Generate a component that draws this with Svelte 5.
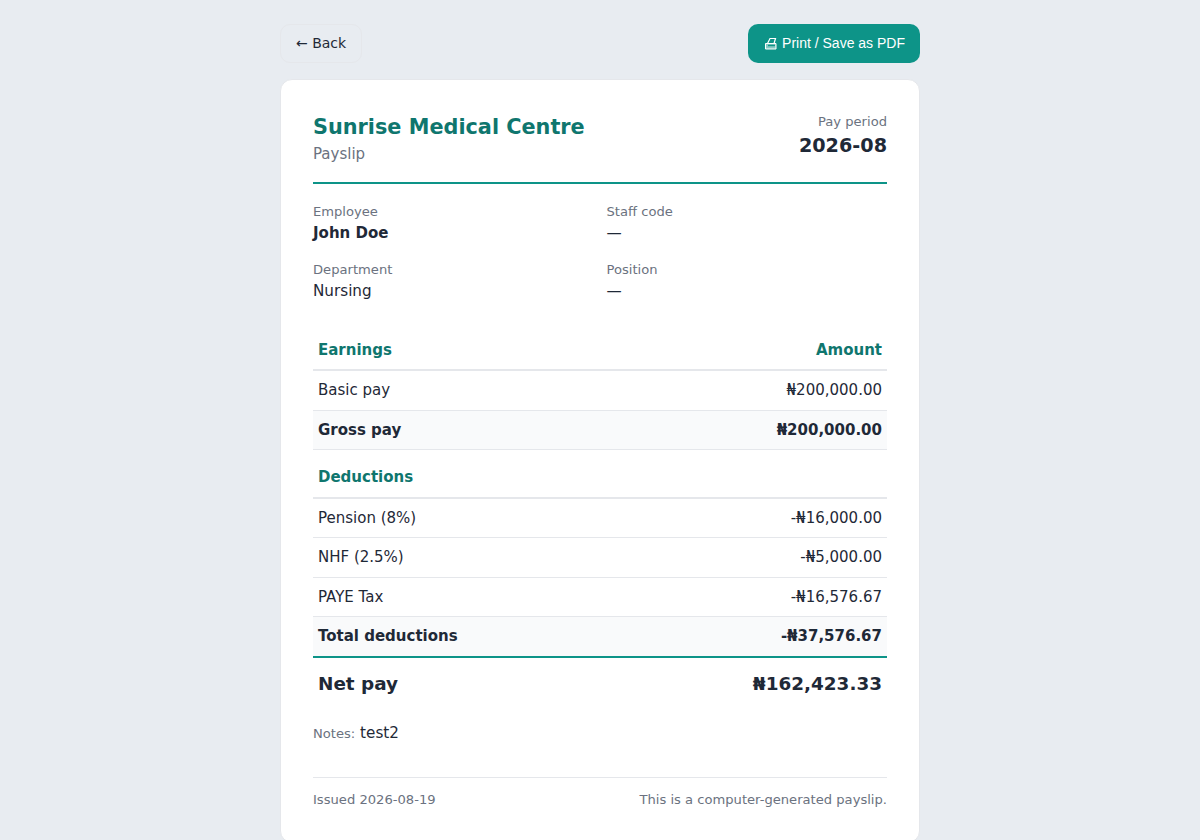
<script>
const earnings = [{ label: 'Basic pay', amount: '₦200,000.00' }];
const deductions = [
  { label: 'Pension (8%)', amount: '-₦16,000.00' },
  { label: 'NHF (2.5%)', amount: '-₦5,000.00' },
  { label: 'PAYE Tax', amount: '-₦16,576.67' }
];
</script>

<main class="page">
  <div class="toolbar">
    <a class="back" href="#back">← Back</a>
    <button class="print">
      <svg class="print-icon" viewBox="0 0 13 13" width="13" height="13" fill="none" stroke="currentColor" aria-hidden="true">
        <path d="M3.5 6.5 6 1.5h5.5L10 6.5" stroke-width="1.2" />
        <path d="M1.5 6.5h10.5v5.5H1.5z" fill="currentColor" fill-opacity="0.5" />
        <path d="M4 8.5h7" stroke="#0d9488" stroke-width="1.4" />
      </svg>
      Print / Save as PDF
    </button>
  </div>

  <section class="card">
    <header class="head">
      <div>
        <h1>Sunrise Medical Centre</h1>
        <div class="sub">Payslip</div>
      </div>
      <div class="period">
        <div class="period-label">Pay period</div>
        <div class="period-val">2026-08</div>
      </div>
    </header>

    <div class="meta">
      <div><div class="label">Employee</div><div class="val"><strong>John Doe</strong></div></div>
      <div><div class="label">Staff code</div><div class="val">—</div></div>
      <div><div class="label">Department</div><div class="val">Nursing</div></div>
      <div><div class="label">Position</div><div class="val">—</div></div>
    </div>

    <table>
      <thead>
        <tr><th>Earnings</th><th class="num">Amount</th></tr>
      </thead>
      <tbody>
        {#each earnings as row}
          <tr><td>{row.label}</td><td class="num">{row.amount}</td></tr>
        {/each}
        <tr class="total"><td>Gross pay</td><td class="num">₦200,000.00</td></tr>
      </tbody>
      <thead>
        <tr><th class="section" colspan="2">Deductions</th></tr>
      </thead>
      <tbody>
        {#each deductions as row}
          <tr><td>{row.label}</td><td class="num">{row.amount}</td></tr>
        {/each}
        <tr class="total"><td>Total deductions</td><td class="num">-₦37,576.67</td></tr>
        <tr class="net"><td>Net pay</td><td class="num">₦162,423.33</td></tr>
      </tbody>
    </table>

    <div class="notes"><span class="label">Notes:</span> test2</div>

    <footer class="foot">
      <span>Issued 2026-08-19</span>
      <span>This is a computer-generated payslip.</span>
    </footer>
  </section>
</main>

<style>
:global(body) {
  margin: 0;
  background: #e8ecf1;
  color: #1f2937;
  font-family: "DejaVu Sans", sans-serif;
  line-height: 1.5;
}

.page {
  width: 640px;
  margin: 0 auto;
  padding: 24px 0;
}

.toolbar {
  display: flex;
  justify-content: space-between;
  align-items: center;
  margin-bottom: 16px;
}

.back {
  padding: 10px 15px;
  border: 1px solid #e5e7eb;
  border-radius: 10px;
  font-size: 14px;
  line-height: 17px;
  color: #1f2937;
  text-decoration: none;
}

.print {
  padding: 11px 15px 11px 16px;
  border: none;
  border-radius: 10px;
  background: #0d9488;
  color: #fff;
  font-family: "Liberation Sans", sans-serif;
  font-size: 14px;
  line-height: 17px;
}

.print-icon {
  vertical-align: -2px;
  margin-right: 1px;
}

.card {
  background: #fff;
  border: 1px solid #e5e7eb;
  border-radius: 12px;
  padding: 32px;
}

.head {
  display: flex;
  justify-content: space-between;
  align-items: flex-start;
  padding-bottom: 16px;
  border-bottom: 2px solid #0d9488;
  margin-bottom: 18px;
}

h1 {
  margin: 0;
  font-size: 20.8px;
  color: #0f766e;
}

.sub {
  font-size: 15px;
  color: #6b7280;
}

.period {
  text-align: right;
}

.period-label, .label {
  font-size: 13.12px;
  color: #6b7280;
}

.period-val {
  font-size: 19.2px;
  font-weight: 700;
}

.label {
  display: block;
  margin-bottom: 1px;
}

.meta {
  display: grid;
  grid-template-columns: 1fr 1fr;
  gap: 14.5px 13px;
  margin-bottom: 27.6px;
}

.val {
  font-size: 15.2px;
}

.val strong {
  font-size: 15px;
}

table {
  width: 100%;
  border-collapse: collapse;
  font-size: 15px;
}

th {
  padding: 8px 5px;
  text-align: left;
  color: #0f766e;
  border-bottom: 2px solid #e5e7eb;
}

th.section {
  padding-top: 16px;
}

td {
  padding: 8px 5px;
  border-bottom: 1px solid #e5e7eb;
}

th.num, td.num {
  text-align: right;
}

.total td {
  font-weight: 700;
  background: #f9fafb;
}

.net td {
  font-size: 18.4px;
  font-weight: 700;
  border-top: 2px solid #0d9488;
  border-bottom: none;
  padding-top: 12px;
  padding-bottom: 12px;
}

.notes {
  margin-top: 12.5px;
  font-size: 15.2px;
}

.notes .label {
  display: inline;
}

.foot {
  display: flex;
  justify-content: space-between;
  margin-top: 32px;
  padding-top: 12.4px;
  border-top: 1px solid #e5e7eb;
  font-size: 13.12px;
  color: #6b7280;
}
</style>
